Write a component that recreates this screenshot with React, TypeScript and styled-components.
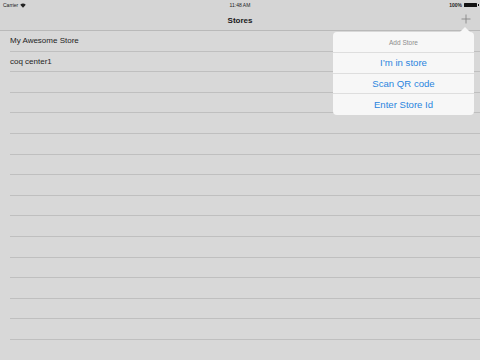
import React from 'react';
import styled, { createGlobalStyle } from 'styled-components';

const GlobalStyle = createGlobalStyle`
	html, body {
		margin: 0;
		padding: 0;
		background: #d7d7d7;
	}
	* {
		box-sizing: border-box;
	}
`;

const Screen = styled.div`
	position: relative;
	width: 480px;
	height: 360px;
	overflow: hidden;
	background: #d8d8d8;
	font-family: 'Liberation Sans', Arial, sans-serif;
	color: #1e1e1e;
`;

const Header = styled.header`
	background: #d5d5d5;
	border-bottom: 1px solid #b9b9b9;
	height: 31px;
	display: flex;
	flex-direction: column;
`;

const StatusBar = styled.div`
	height: 10px;
	padding: 0 3px;
	display: grid;
	grid-template-columns: 1fr auto 1fr;
	align-items: center;
	font-size: 5px;
	color: #222;
`;

const StatusLeft = styled.div`
	display: flex;
	align-items: center;
	gap: 2px;
`;

const StatusRight = styled.div`
	display: flex;
	align-items: center;
	justify-content: flex-end;
	gap: 2px;
	font-weight: bold;
`;

const Battery = styled.span`
	display: inline-block;
	width: 13px;
	height: 4px;
	background: #111;
	border-radius: 0.5px;
	position: relative;
	&::after {
		content: '';
		position: absolute;
		right: -1.5px;
		top: 1px;
		width: 1px;
		height: 2px;
		background: #111;
	}
`;

const NavBar = styled.div`
	flex: 1;
	display: grid;
	grid-template-columns: 1fr auto 1fr;
	align-items: center;
	padding: 0 9px;
`;

const Title = styled.div`
	font-size: 8px;
	font-weight: bold;
	color: #1a1a1a;
`;

const NavActions = styled.div`
	display: flex;
	justify-content: flex-end;
	padding-bottom: 2px;
`;

const List = styled.ul`
	list-style: none;
	margin: 0;
	padding: 0;
`;

const Row = styled.li`
	height: 20.6px;
	padding-left: 10px;
`;

const RowInner = styled.div`
	height: 100%;
	display: flex;
	align-items: center;
	font-size: 8px;
	border-bottom: 1px solid #bfbfbf;
`;

const Popover = styled.div`
	position: absolute;
	left: 333px;
	top: 32px;
	width: 141px;
	background: #f7f7f7;
	border-radius: 4px;
	&::before {
		content: '';
		position: absolute;
		top: -5px;
		left: 127px;
		border-left: 5px solid transparent;
		border-right: 5px solid transparent;
		border-bottom: 5px solid #f7f7f7;
	}
`;

const PopTitle = styled.div`
	height: 21px;
	display: flex;
	align-items: center;
	justify-content: center;
	font-size: 6.5px;
	color: #8d8d8d;
	border-bottom: 1px solid #dedede;
`;

const PopButton = styled.div<{ $last?: boolean }>`
	height: 20.6px;
	display: flex;
	align-items: center;
	justify-content: center;
	font-size: 9.6px;
	color: #2a85de;
	border-bottom: ${({ $last }) => ($last ? 'none' : '1px solid #dedede')};
`;

const stores = ['My Awesome Store', 'coq center1'];
const rowCount = 16;

const Wifi = () => (
	<svg width="6" height="5" viewBox="0 0 12 9">
		<path d="M6 9 L0.5 3 A8 8 0 0 1 11.5 3 Z" fill="#222" />
	</svg>
);

const Plus = () => (
	<svg width="10" height="10" viewBox="0 0 10 10">
		<path d="M5 0.5 V9.5 M0.5 5 H9.5" stroke="#7d7d7d" strokeWidth="0.8" />
	</svg>
);

export default function App() {
	return (
		<>
			<GlobalStyle />
			<Screen>
				<Header>
					<StatusBar>
						<StatusLeft>
							Carrier <Wifi />
						</StatusLeft>
						<div>11:48 AM</div>
						<StatusRight>
							100% <Battery />
						</StatusRight>
					</StatusBar>
					<NavBar>
						<div />
						<Title>Stores</Title>
						<NavActions>
							<Plus />
						</NavActions>
					</NavBar>
				</Header>
				<List>
					{Array.from({ length: rowCount }).map((_, i) => (
						<Row key={i}>
							<RowInner>{stores[i] ?? ''}</RowInner>
						</Row>
					))}
				</List>
				<Popover>
					<PopTitle>Add Store</PopTitle>
					<PopButton>I’m in store</PopButton>
					<PopButton>Scan QR code</PopButton>
					<PopButton $last>Enter Store Id</PopButton>
				</Popover>
			</Screen>
		</>
	);
}
